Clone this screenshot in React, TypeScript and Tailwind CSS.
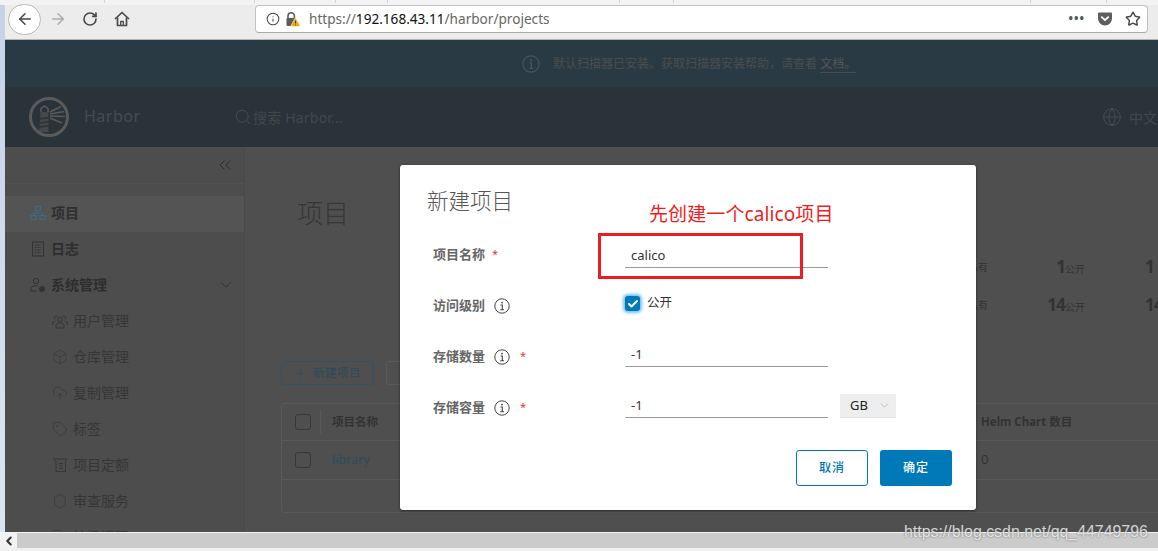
import { ArrowLeft, ArrowRight, RotateCw, Star, Search, Globe, Info, ChevronsLeft, ChevronDown, Box, CloudUpload, Tag, Shield, Plus, Check, ChevronLeft } from 'lucide-react';
import type { ReactNode } from 'react';

const FONT = "font-['Noto_Sans','Noto_Sans_CJK_SC',sans-serif]";

const tabTicks = [105, 150, 81, 52, 232, 54, 357, 76];

function LighthouseLogo() {
  return (
    <svg viewBox="0 0 40 40" className="h-10 w-10 text-[#5a5a5a]" fill="none" stroke="currentColor">
      <circle cx="20" cy="20" r="18.500" strokeWidth="3" />
      <path d="M11.500 15 H19.500 V35 H10Z" fill="currentColor" stroke="none" fillOpacity="0.55" />
      <path d="M12 15 V11.500 L15.500 9 L19 11.500 V15" strokeWidth="1.500" />
      <rect x="14" y="11.500" width="3" height="3" fill="#2a3339" stroke="none" />
      <path d="M11 22 L19.500 20.500 M11 26 L20 24.500 M10.500 30 L20.500 28.500" stroke="#2a3339" strokeWidth="1.300" />
      <path d="M21 15 L32 9.500 M21 17 L35 14.500 M21 19 L36 19.500 M21 21 L33 26" strokeWidth="1.700" />
    </svg>
  );
}

function PageLock() {
  return (
    <svg viewBox="0 0 16 16" className="h-4 w-4 shrink-0">
      <path d="M3 7V5a3.200 3.200 0 0 1 6.400 0v2" fill="none" stroke="#5b5b5b" strokeWidth="1.600" />
      <rect x="1.500" y="7" width="9" height="8" rx="1" fill="#5b5b5b" />
      <path d="M10.500 6.500 L15.500 15.500 H5.500Z" fill="#f5a800" stroke="#fff" strokeWidth="0.6" />
      <path d="M10.500 9.500 V12.500 M10.500 13.500 V14.300" stroke="#3c2c00" strokeWidth="0.9" />
    </svg>
  );
}

function PocketIcon() {
  return (
    <svg viewBox="0 0 16 16" className="h-4 w-4">
      <path d="M1 2.500 A1 1 0 0 1 2 1.500 H14 A1 1 0 0 1 15 2.500 V7.500 A7 7 0 0 1 1 7.500Z" fill="#5e5e5e" />
      <path d="M4.800 6.200 L8 9.200 L11.200 6.200" fill="none" stroke="#fff" strokeWidth="1.800" strokeLinecap="round" strokeLinejoin="round" />
    </svg>
  );
}

function HomeIcon() {
  return (
    <svg viewBox="0 0 16 16" className="h-4 w-4" fill="none" stroke="#4a4a4a" strokeWidth="1.700" strokeLinejoin="round">
      <path d="M1 8 L8 1.500 L15 8" />
      <path d="M3.500 6.500 V14.500 H12.500 V6.500" />
      <path d="M6.700 14.500 V10.500 H9.300 V14.500" strokeWidth="1.300" />
    </svg>
  );
}

function OrgIcon() {
  return (
    <svg viewBox="0 0 16 16" className="h-4 w-4 shrink-0" fill="none" stroke="#3d6a85" strokeWidth="1">
      <rect x="5.500" y="1.500" width="5" height="4" />
      <rect x="1" y="10.500" width="5" height="4" />
      <rect x="10" y="10.500" width="5" height="4" />
      <path d="M3.500 10.500 V8 H12.500 V10.500 M8 5.500 V8" />
    </svg>
  );
}

function LogIcon() {
  return (
    <svg viewBox="0 0 16 16" className="h-4 w-4" fill="none" stroke="#333" strokeWidth="1">
      <rect x="2.500" y="1" width="11" height="14" />
      <path d="M5 4 H11 M5 6.500 H11 M5 9 H11 M5 11.500 H11" strokeDasharray="1 0.500" />
    </svg>
  );
}

function AdminIcon() {
  return (
    <svg viewBox="0 0 16 16" className="h-4 w-4" fill="none" stroke="#333" strokeWidth="1">
      <circle cx="6" cy="4" r="2.700" />
      <path d="M1 14 V11.500 C1 9.500 4 8.500 7.500 8.800" />
      <path d="M1 14 H7" />
      <circle cx="12" cy="12" r="2.500" fill="#333" strokeWidth="1.500" strokeDasharray="1.200 0.700" />
    </svg>
  );
}

function GroupIcon() {
  return (
    <svg viewBox="0 0 16 16" className="h-4 w-4" fill="none" stroke="#363636" strokeWidth="1">
      <circle cx="8" cy="6.500" r="2.300" />
      <path d="M4 15 V12.500 C4 10.800 6 10 8 10 S12 10.800 12 12.500 V15 Z" />
      <path d="M5.500 3.500 A2 2 0 1 0 2.800 6.500 M10.500 3.500 A2 2 0 1 1 13.200 6.500" />
      <path d="M0.500 12 V10 C0.500 9 1.800 8.500 3.300 8.500 M15.500 12 V10 C15.500 9 14.200 8.500 12.700 8.500" />
    </svg>
  );
}

function QuotaIcon() {
  return (
    <svg viewBox="0 0 16 16" className="h-4 w-4" fill="none" stroke="#363636" strokeWidth="1">
      <path d="M1 2 H15 L13.500 4.500 V14.500 H4 V4.500 L1 2Z" />
      <path d="M7 6.500 H11 M7 9 H11 M7 11.500 H11" />
    </svg>
  );
}

function CircleInfo({ className }: { className: string }) {
  return (
    <svg viewBox="0 0 16 16" className={className} fill="none" stroke="currentColor">
      <circle cx="8" cy="8" r="7.200" strokeWidth="1" />
      <circle cx="8" cy="4.600" r="0.900" fill="currentColor" stroke="none" />
      <path d="M6.500 7 H8.300 V11.800 M6.300 11.800 H10" strokeWidth="1.100" />
    </svg>
  );
}

function NavItem({ icon, label, active, sub, chevron }: { icon: ReactNode; label: string; active?: boolean; sub?: boolean; chevron?: boolean }) {
  return (
    <div className={`flex h-9 shrink-0 items-center pb-[3px] ${sub ? 'pl-[47px]' : 'pl-[25px]'} ${active ? 'bg-[#545454]' : ''}`}>
      <span className="flex w-[21px] shrink-0">{icon}</span>
      <span className={sub ? 'text-[14px] text-[#363636]' : 'text-[14px] font-bold text-[#2e2e2e]'}>{label}</span>
      {chevron && <ChevronDown className="ml-auto mr-[9px] h-[18px] w-[18px] text-[#2e2e2e]" strokeWidth={1.2} />}
    </div>
  );
}

function TableCheck() {
  return <span className="block h-4 w-4 rounded-[3px] border border-[#383838]" />;
}

function FormRow({ label, info, required, children }: { label: string; info?: boolean; required?: boolean; children: ReactNode }) {
  return (
    <div className="flex h-[51px] items-center">
      <div className="flex w-[198px] shrink-0 items-center pl-[6px] text-[13px] font-bold text-[#666]">
        <span>{label}</span>
        {info && <CircleInfo className="ml-[9px] h-4 w-4 text-[#444]" />}
        {required && <span className={`text-[11px] font-normal text-[#d93a2b] ${info ? 'ml-[10px]' : 'ml-[7px]'}`}>*</span>}
      </div>
      {children}
    </div>
  );
}

function UnderlineInput({ value, className }: { value: string; className: string }) {
  return (
    <div className={`h-6 w-[203px] border-b border-[#9a9a9a] pl-[6px] text-[13px] leading-[20px] text-[#333] ${className}`}>{value}</div>
  );
}

function StatValue({ value }: { value: string }) {
  return (
    <span className="text-[10px] text-[#333]">
      <span className="text-[17px] font-bold tracking-tighter">{value}</span>公开
    </span>
  );
}

export default function App() {
  return (
    <div className={`relative flex h-[551px] w-[1158px] flex-col overflow-hidden bg-[#ececec] ${FONT}`}>
      {/* tab strip, only the bottom of it is on the picture */}
      <div className="flex h-[5px] shrink-0 bg-[#f3f3f5]">
        {tabTicks.map((w, i) => (
          <div key={i} className="h-[3px] shrink-0 border-r border-[#d5d5d8]" style={{ width: w }} />
        ))}
      </div>

      <div className="flex min-h-0 flex-1">
        <div className="w-[5px] shrink-0 bg-gradient-to-b from-[#c6d2e6] to-[#dbe5f2]" />

        <div className="flex min-w-0 flex-1 flex-col">
          {/* browser toolbar */}
          <div className="relative flex h-[35px] shrink-0 items-center border-b border-[#b4b4b2] bg-[#ececec] pb-[6px]">
            <div className="ml-[3px] flex h-[31px] w-[33px] items-center justify-center rounded-full border border-[#b9b9b9] bg-white">
              <ArrowLeft className="h-[18px] w-[18px] text-[#444]" strokeWidth={2} />
            </div>
            <ArrowRight className="ml-[8px] h-[18px] w-[18px] text-[#acacac]" strokeWidth={2} />
            <RotateCw className="ml-[15px] h-4 w-4 text-[#484848]" strokeWidth={2.4} />
            <span className="ml-[16px]"><HomeIcon /></span>
            <div className="ml-[125px] flex h-[28px] w-[893px] items-center rounded-[4px] border border-[#c2c2c0] border-b-[#a9a9a7] bg-white pl-[10px]">
              <Info className="h-[14px] w-[14px] text-[#4a4a4a]" strokeWidth={1.8} />
              <span className="ml-[5px]"><PageLock /></span>
              <span className="ml-[8px] text-[13.600px] text-[#666]">
                https://<span className="text-[#111]">192.168.43.11</span>/harbor/projects
              </span>
              <div className="ml-auto flex items-center">
                <span className="text-[12px] font-bold tracking-[1px] text-[#555]">•••</span>
                <span className="ml-[12px]"><PocketIcon /></span>
                <Star className="ml-[12px] mr-[6px] h-4 w-4 text-[#4a4a4a]" strokeWidth={2.2} />
              </div>
            </div>
          </div>

          {/* notice banner */}
          <div className="flex h-[47px] shrink-0 items-center bg-[#2a3a45] pl-[517px] text-[12px] text-[#4a4d4e]">
            <CircleInfo className="h-[18px] w-[18px] text-[#4a5356]" />
            <span className="ml-[13px]">默认扫描器已安装。获取扫描器安装帮助，请查看 <span className="border-b border-[#4a4d4e] text-[#555]">文档。</span></span>
          </div>

          {/* harbor header */}
          <div className="flex h-[60px] shrink-0 items-center bg-[#2a3339] pl-[24px]">
            <LighthouseLogo />
            <span className="ml-[15px] mt-[-2px] w-[150px] text-[16px] tracking-[0.5px] text-[#484b4d]">Harbor</span>
            <Search className="h-[18px] w-[18px] text-[#4b5053]" strokeWidth={1.2} />
            <span className="ml-[1px] text-[14px] tracking-[0.2px] text-[#42474a]">搜索 Harbor...</span>
            <Globe className="ml-[759px] h-5 w-5 shrink-0 text-[#4b5053]" strokeWidth={1} />
            <span className="ml-[7px] shrink-0 text-[14px] text-[#42474a]">中文</span>
          </div>

          {/* dimmed page body */}
          <div className="flex min-h-0 flex-1">
            <aside className="flex w-[240px] shrink-0 flex-col overflow-hidden border-r border-[#494949] bg-[#4d4d4d]">
              <div className="mb-[12px] flex h-[37px] shrink-0 items-center justify-end border-b border-[#525252] pr-[9px]">
                <ChevronsLeft className="h-5 w-5 text-[#2e2e2e]" strokeWidth={1.2} />
              </div>
              <NavItem icon={<OrgIcon />} label="项目" active />
              <NavItem icon={<LogIcon />} label="日志" />
              <NavItem icon={<AdminIcon />} label="系统管理" chevron />
              <NavItem sub icon={<GroupIcon />} label="用户管理" />
              <NavItem sub icon={<Box className="h-4 w-4 text-[#363636]" strokeWidth={1} />} label="仓库管理" />
              <NavItem sub icon={<CloudUpload className="h-4 w-4 text-[#363636]" strokeWidth={1} />} label="复制管理" />
              <NavItem sub icon={<Tag className="h-4 w-4 text-[#363636]" strokeWidth={1} />} label="标签" />
              <NavItem sub icon={<QuotaIcon />} label="项目定额" />
              <NavItem sub icon={<Shield className="h-4 w-4 text-[#363636]" strokeWidth={1} />} label="审查服务" />
              <NavItem sub icon={<Tag className="h-4 w-4 text-[#363636]" strokeWidth={1} />} label="垃圾清理" />
            </aside>

            <main className="min-w-0 flex-1 overflow-hidden bg-[#4f4f4f]">
              <div className="flex h-[214px] items-start">
                <div className="mt-[48px] w-[655px] shrink-0 pl-[52px] text-[26px] font-light leading-[36px] text-[#363636]">项目</div>
                <div className="mt-[101px] w-[300px] shrink-0 text-[#333]">
                  {[['1', '私有'], ['14', '私有']].map(([n, own], i) => (
                    <div key={i} className="flex h-[38px] items-center">
                      <span className="w-[88px] shrink-0 text-right text-[10px]">{own}</span>
                      <span className="w-[97px] shrink-0 text-right"><StatValue value={n} /></span>
                      <span className="ml-[60px] shrink-0 text-[17px] font-bold tracking-tighter">{n}</span>
                    </div>
                  ))}
                </div>
              </div>

              <div className="ml-[36px] flex items-center gap-[12px]">
                <div className="flex h-6 w-[93px] items-center justify-center gap-[6px] rounded-[3px] border border-[#2f5368] text-[11.500px] tracking-[0.5px] text-[#2d4a5b]">
                  <Plus className="h-[13px] w-[13px]" strokeWidth={1.2} />
                  新建项目
                </div>
                <div className="h-6 w-[90px] rounded-[3px] border border-[#5a5a5a]" />
              </div>

              <div className="ml-[36px] mt-[18px] h-[110px] w-[960px] overflow-hidden rounded-[3px] border border-[#595959]">
                <div className="flex h-[37px] items-center border-b border-[#595959] text-[11.500px] font-bold text-[#333]">
                  <div className="flex h-6 w-[39px] shrink-0 items-center border-r border-[#595959] pl-[13px]"><TableCheck /></div>
                  <div className="w-[660px] shrink-0 pl-[11px]">项目名称</div>
                  <div>Helm Chart 数目</div>
                </div>
                <div className="flex h-[39px] items-center border-b border-[#595959] text-[12px] text-[#333]">
                  <div className="w-[39px] shrink-0 pl-[13px]"><TableCheck /></div>
                  <div className="w-[660px] shrink-0 pl-[11px] text-[12.500px] text-[#2c4c60]">library</div>
                  <div className="text-[13px]">0</div>
                </div>
              </div>
            </main>
          </div>
        </div>
      </div>

      {/* bottom scrollbar */}
      <div className="flex h-[19px] shrink-0 flex-col border-t border-[#f4f4f4] bg-[#f0f0f0]">
        <div className="flex h-[15px] shrink-0 bg-[#cbcbcb]">
          <div className="flex w-[17px] items-center justify-center bg-[#f2f2f2]">
            <ChevronLeft className="h-[14px] w-[14px] text-[#333]" strokeWidth={3.5} />
          </div>
        </div>
      </div>

      {/* modal */}
      <div className="absolute left-[400px] top-[165px] h-[345px] w-[576px] rounded-[3px] bg-white pl-[27px] shadow-[0_1px_3px_rgba(0,0,0,0.5)]">
        <div className="pt-[20px] text-[21.500px] font-light leading-[32px] text-[#565656]">新建项目</div>
        <div className="mt-[12px]">
          <FormRow label="项目名称" required>
            <UnderlineInput value="calico" className="mt-[2px] pt-[1px]" />
          </FormRow>
          <FormRow label="访问级别" info>
            <div className="mt-[-4px] flex items-center">
              <span className="flex h-[15px] w-[15px] items-center justify-center rounded-[3px] bg-[#0079b8] shadow-[0_0_3px_2px_rgba(88,176,232,0.8)]">
                <Check className="h-3 w-3 text-white" strokeWidth={4} />
              </span>
              <span className="ml-[7px] text-[12.500px] text-[#333]">公开</span>
            </div>
          </FormRow>
          <FormRow label="存储数量" info required>
            <UnderlineInput value="-1" className="mt-[-4px] pt-[1px]" />
          </FormRow>
          <FormRow label="存储容量" info required>
            <UnderlineInput value="-1" className="mt-[-4px] pt-[1px]" />
            <div className="ml-[12px] mt-[-3px] flex h-6 w-[56px] items-center border-b border-[#e2e2e2] bg-[#eeeeee] pl-[10px] text-[13px] text-[#222]">
              GB
              <ChevronDown className="ml-[10px] h-[13px] w-[13px] text-[#b5b5b5]" strokeWidth={1.5} />
            </div>
          </FormRow>
        </div>
        <div className="mt-[17px] flex justify-end gap-[12px] pr-[24px]">
          <div className="flex h-9 w-[72px] items-center justify-center rounded-[3px] border border-[#0079b8] text-[12px] font-medium tracking-[1px] text-[#0079b8]">取消</div>
          <div className="flex h-9 w-[72px] items-center justify-center rounded-[3px] bg-[#0079b8] text-[12px] font-medium tracking-[1px] text-white">确定</div>
        </div>
      </div>

      {/* red annotation drawn over the screenshot */}
      <div className="absolute left-[649px] top-[201px] text-[19px] leading-[26px] tracking-[0.1px] text-[#f01c24]">先创建一个calico项目</div>
      <div className="absolute left-[598px] top-[233px] h-[46px] w-[205px] border-[3px] border-[#ed1c24]" />

      {/* blog watermark */}
      <div className="absolute left-[904px] top-[521px] font-['Liberation_Sans',sans-serif] text-[15.900px] leading-[22px] text-white/75 [text-shadow:0_0_2px_rgba(90,90,90,0.9)]">https://blog.csdn.net/qq_44749796</div>
    </div>
  );
}
